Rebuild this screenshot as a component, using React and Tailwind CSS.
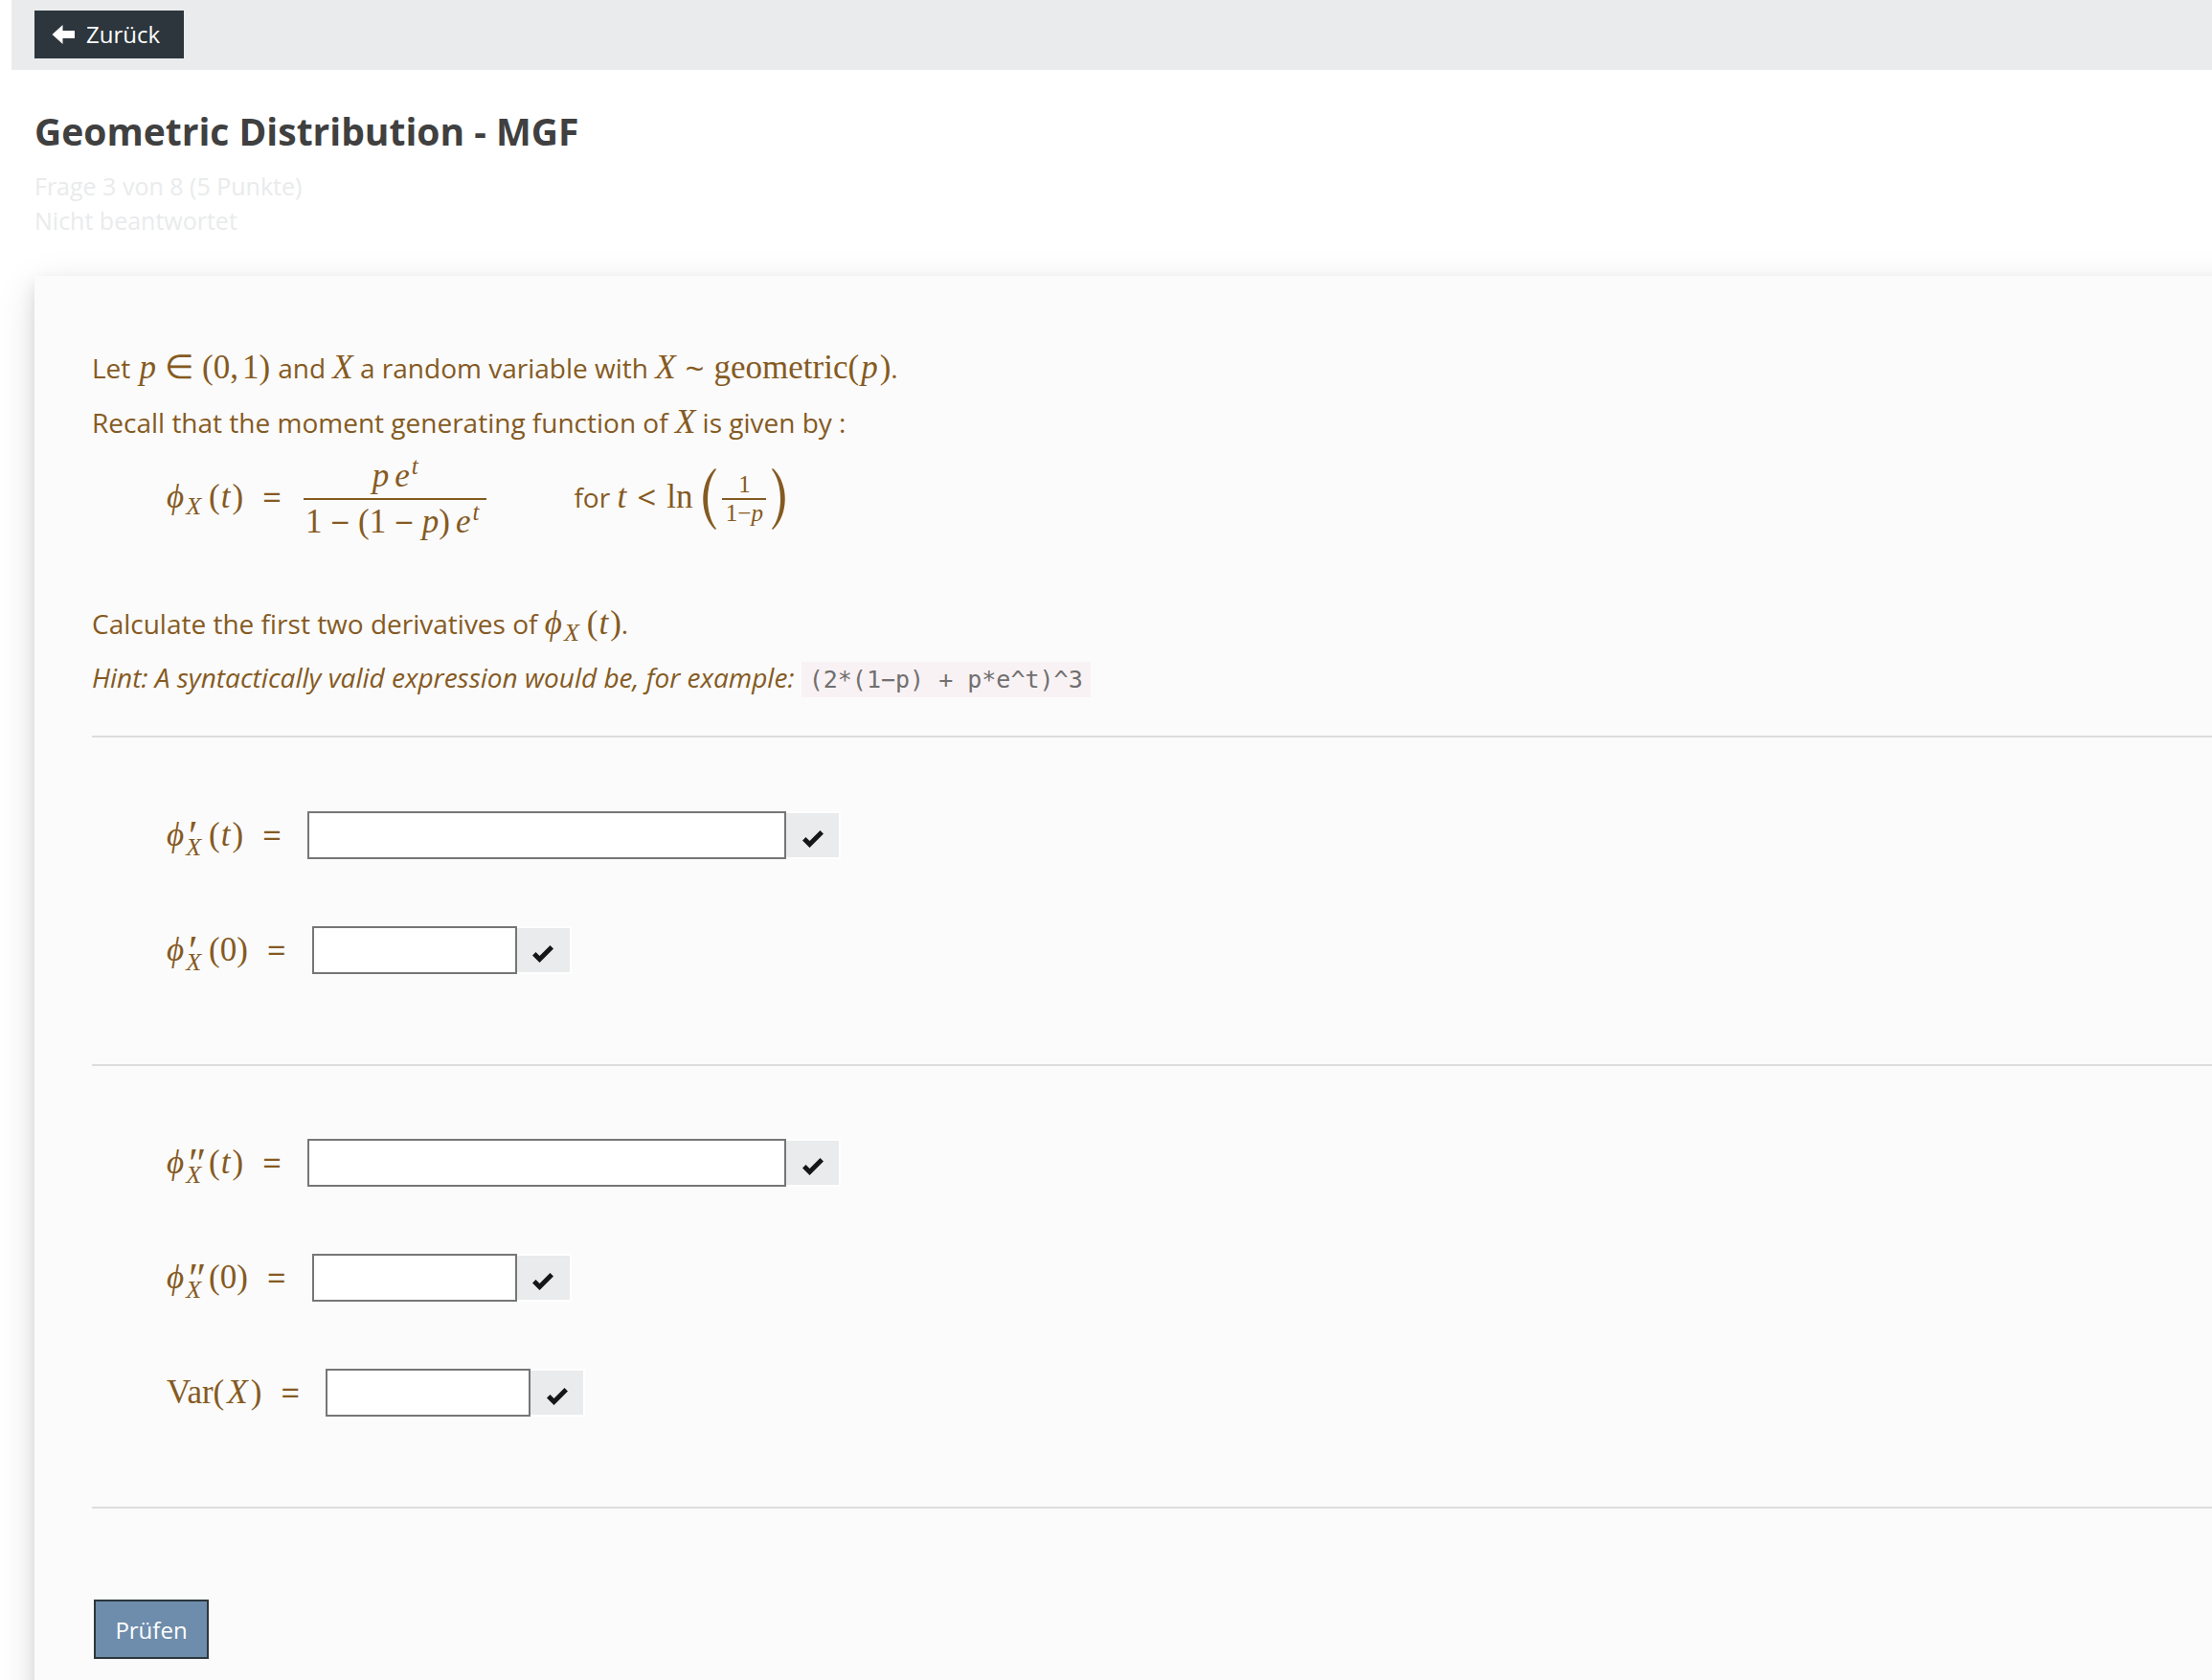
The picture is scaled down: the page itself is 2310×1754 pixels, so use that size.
import React from "react";

function V({ children }) {
  return <i className="font-['Liberation_Serif',serif] text-[35px] leading-none">{children}</i>;
}

function R({ children }) {
  return <span className="font-['Liberation_Serif',serif] text-[35px] leading-none">{children}</span>;
}

function Op({ children }) {
  return <span className="align-[-2px] font-['Open_Sans',sans-serif] text-[35px] leading-none">{children}</span>;
}

function OfT() {
  return (
    <>
      <R>(</R>
      <span className="mr-[2px] ml-px">
        <V>t</V>
      </span>
      <R>)</R>
    </>
  );
}

function Phi({ prime }) {
  return (
    <span className="whitespace-nowrap">
      <i className="mr-[2px] font-['Liberation_Serif','DejaVu_Serif',serif] text-[35px] leading-none">ϕ</i>
      {prime && (
        <i className="inline-block h-[18px] w-0 align-[-4px] font-['Liberation_Serif',serif] text-[44px] leading-[18px]">
          {prime}
        </i>
      )}
      <i
        className={
          "mr-2 inline-block h-[18px] font-['Liberation_Serif',serif] text-[26px] leading-[18px] " +
          (prime ? "align-[-10px]" : "align-[-7px]")
        }
      >
        X
      </i>
    </span>
  );
}

function Exp() {
  return (
    <>
      <V>e</V>
      <i className="ml-[2px] inline-block align-[13px] font-['Liberation_Serif',serif] text-[25px] leading-none">t</i>
    </>
  );
}

function Paren({ right }) {
  return (
    <svg width="14" height="64" viewBox="0 0 14 64" aria-hidden="true" className={right ? "-scale-x-100" : ""}>
      <path d="M13 0 C-4 15 -4 49 13 64 L14 63 C2 48 2 16 14 1 Z" fill="currentColor" />
    </svg>
  );
}

function Answer({ id, label, wide }) {
  return (
    <div className="flex h-[50px] items-center">
      <label htmlFor={id} className="flex items-baseline whitespace-nowrap">
        {label}
        <span className="mr-[27px] ml-[20px]">
          <Op>=</Op>
        </span>
      </label>
      <input
        id={id}
        type="text"
        className={
          "h-[50px] border-2 border-[#767676] bg-white px-2 outline-none " + (wide ? "w-[500px]" : "w-[214px]")
        }
      />
      <button
        type="button"
        aria-label="Prüfen"
        className="flex h-[50px] w-[57px] items-center justify-center border-y-2 border-r-2 border-white bg-[#e9ebec] pt-2"
      >
        <svg width="24" height="20" viewBox="0 0 24 20" aria-hidden="true">
          <path d="M1 11.5 L4.5 8 L8.5 12 L19.5 1 L23 4.5 L8.5 19 Z" fill="#161616" />
        </svg>
      </button>
    </div>
  );
}

export default function App() {
  return (
    <div className="min-h-screen overflow-x-clip bg-white font-['Open_Sans',sans-serif] text-[#404040]">
      <header className="ml-3 h-[73px] bg-[#e9ebec] px-6 pt-[11px]">
        <button
          type="button"
          className="flex h-[50px] w-[156px] items-center gap-3 bg-[#2c363c] pl-[18px] text-[24px] text-white"
        >
          <svg width="24" height="20" viewBox="0 0 24 20" aria-hidden="true">
            <path d="M0.5 10 L11.5 0 V6 H24 V14 H11.5 V20 Z" fill="#fff" />
          </svg>
          Zurück
        </button>
      </header>

      <div className="pt-[37px] pl-9">
        <h1 className="text-[39px] leading-[54px] font-bold">Geometric Distribution - MGF</h1>
        <div className="mt-3 text-[25px] leading-[36px] text-[#e9ebec]">
          <p>Frage 3 von 8 (5 Punkte)</p>
          <p>Nicht beantwortet</p>
        </div>
      </div>

      <main className="mt-10 -mr-12 ml-9 min-h-[1500px] bg-[#fbfbfb] pt-[68px] pl-[60px] text-[28px] leading-[57px] text-[#855a22] shadow-[0_8px_16px_rgba(0,0,0,0.10),0_12px_40px_rgba(0,0,0,0.12)]">
        <p className="h-[57px]">
          Let{" "}
          <span className="mr-2 ml-[2px]">
            <V>p</V>
            <span className="mx-[9px]">
              <R>∈</R>
            </span>
            <R>(0</R>
            <span className="mr-1">
              <R>,</R>
            </span>
            <R>1)</R>
          </span>
          and{" "}
          <V>X</V> a random variable with <V>X</V>
          <span className="mx-[10px]">
            <Op>~</Op>
          </span>
          <R>geometric(</R>
          <span className="mx-[2px]">
            <V>p</V>
          </span>
          <R>)</R>.
        </p>
        <p className="h-[57px]">
          Recall that the moment generating function of <V>X</V> is given by :
        </p>

        <div className="mt-[3px] flex h-[96px] items-center pl-[78px]">
          <span className="pb-1 whitespace-nowrap">
            <Phi />
            <OfT />
            <span className="mr-[23px] ml-[20px]">
              <Op>=</Op>
            </span>
          </span>
          <span className="flex flex-col items-center">
            <span className="h-[46px] leading-[40px]">
              <span className="mr-[6px]">
                <V>p</V>
              </span>
              <Exp />
            </span>
            <span className="h-[2px] w-full bg-current" />
            <span className="h-[46px] pr-2 pl-[2px] leading-[42px] whitespace-nowrap">
              <R>1 </R>
              <Op>−</Op>
              <R> (1 </R>
              <Op>−</Op>
              <R> </R>
              <V>p</V>
              <span className="mr-[6px]">
                <R>)</R>
              </span>
              <Exp />
            </span>
          </span>
          <span className="ml-[91px] pb-1 whitespace-nowrap">
            for <V>t</V>
            <span className="mx-[11px]">
              <Op>&lt;</Op>
            </span>
            <R>ln</R>
          </span>
          <span className="ml-[11px] flex items-center gap-[6px]">
            <Paren />
            <span className="flex w-[46px] flex-col items-center font-['Liberation_Serif',serif] text-[25px] leading-[28px]">
              <span>1</span>
              <span className="h-[2px] w-full bg-current" />
              <span>
                1−<i>p</i>
              </span>
            </span>
            <Paren right />
          </span>
        </div>

        <p className="mt-[54px] h-[56px]">
          Calculate the first two derivatives of <Phi />
          <OfT />.
        </p>
        <p className="h-[57px]">
          <em>Hint: A syntactically valid expression would be, for example:</em>{" "}
          <code className="bg-[#f9f2f4] px-2 py-1 font-['DejaVu_Sans_Mono',monospace] text-[25px] text-[#707070]">
            (2*(1−p) + p*e^t)^3
          </code>
        </p>

        <form onSubmit={(e) => e.preventDefault()}>
          <hr className="mt-8 border-t-2 border-[#dddddd]" />
          <div className="flex flex-col gap-[70px] pt-[77px] pb-[94px] pl-[78px] leading-[50px]">
            <Answer id="d1t" wide label={<span><Phi prime="′" /><OfT /></span>} />
            <Answer id="d10" label={<span><Phi prime="′" /><R>(0)</R></span>} />
          </div>
          <hr className="border-t-2 border-[#dddddd]" />
          <div className="flex flex-col gap-[70px] pt-[76px] pb-[94px] pl-[78px] leading-[50px]">
            <Answer id="d2t" wide label={<span><Phi prime="″" /><OfT /></span>} />
            <Answer id="d20" label={<span><Phi prime="″" /><R>(0)</R></span>} />
            <Answer
              id="var"
              label={
                <span>
                  <R>Var(</R>
                  <span className="mx-[3px]">
                    <V>X</V>
                  </span>
                  <R>)</R>
                </span>
              }
            />
          </div>
          <hr className="border-t-2 border-[#dddddd]" />
          <button
            type="submit"
            className="mt-[95px] ml-[2px] flex h-[62px] w-[120px] items-center justify-center border-2 border-[#2c363c] bg-[#6e8cab] text-[24px] text-white"
          >
            Prüfen
          </button>
        </form>
      </main>
    </div>
  );
}
